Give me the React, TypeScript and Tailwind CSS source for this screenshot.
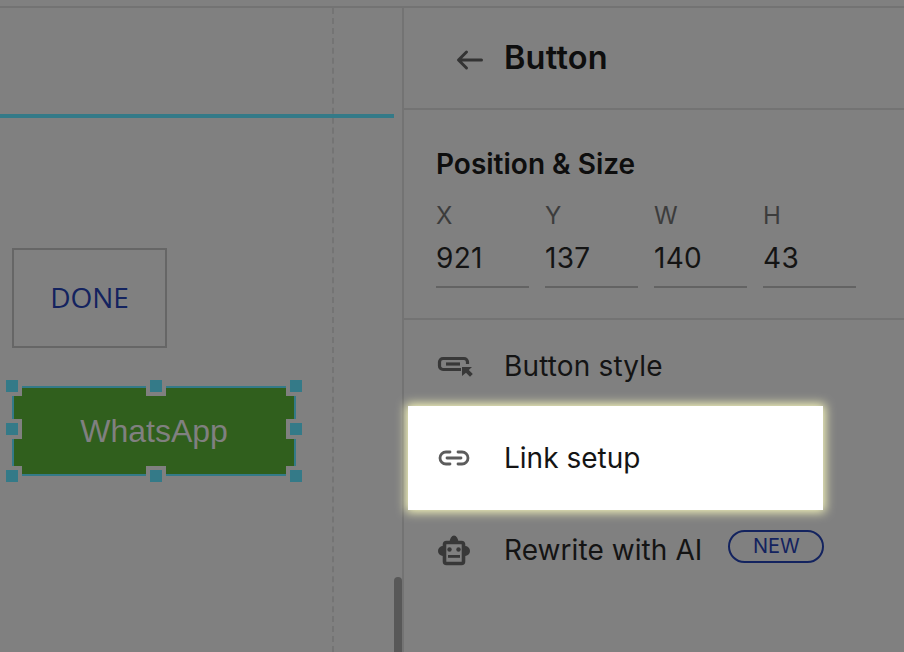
export default function App() {
  const fields = [
    ["X", "921"],
    ["Y", "137"],
    ["W", "140"],
    ["H", "43"],
  ];
  const handles = [
    "left-[2px] top-[376px]", "left-[146px] top-[376px]", "left-[286px] top-[376px]",
    "left-[2px] top-[419px]", "left-[286px] top-[419px]",
    "left-[2px] top-[466px]", "left-[146px] top-[466px]", "left-[286px] top-[466px]",
  ];
  return (
    <div className="w-[904px] h-[652px] overflow-hidden bg-[#808080] flex flex-col font-['Inter',sans-serif]">
      <div className="h-[8px] shrink-0 border-b-2 border-[#737373]" />
      <div className="flex flex-1 min-h-0">
        <div className="relative w-[403px] shrink-0 -mt-[8px]">
          <div className="absolute left-[332px] top-[8px] bottom-0 border-l-2 border-dashed border-[#747474]" />
          <div className="absolute left-0 top-[114px] w-[394px] h-[4px] bg-[#347a88]" />
          <div className="absolute left-[12px] top-[248px] w-[155px] h-[100px] border-2 border-[#666666] flex items-center justify-center pb-[2px] text-[#13235f] text-[28px] font-['Open_Sans',sans-serif]">
            DONE
          </div>
          <div className="absolute left-[12px] top-[386px] w-[284px] h-[90px] bg-[#305f1d] border-2 border-[#347a88] flex items-center justify-center text-[#808080] text-[32px] font-['Liberation_Sans',sans-serif]">
            WhatsApp
          </div>
          {handles.map((h) => (
            <div key={h} className={`absolute ${h} w-[12px] h-[12px] box-content border-[4px] border-[#808080] bg-[#347a88]`} />
          ))}
          <div className="absolute left-[394px] top-[577px] w-[8px] h-[75px] rounded-t-[4px] bg-[#585858]" />
        </div>
        <div className="flex-1 min-w-0 border-l-2 border-[#737373] -ml-[1px] flex flex-col">
          <div className="h-[102px] shrink-0 border-b-2 border-[#737373] flex items-center pl-[50px] gap-[20px]">
            <svg width="30" height="24" viewBox="0 0 30 24" fill="none" stroke="#333333" strokeWidth="3" strokeLinecap="round" strokeLinejoin="round" className="mt-[3px]">
              <path d="M27.500 12H5M12.500 4L4.500 12l8 8" />
            </svg>
            <span className="text-[32.500px] tracking-[0.2px] font-semibold text-[#0e0e0e]">Button</span>
          </div>
          <div className="h-[210px] shrink-0 border-b-2 border-[#737373] pl-[32px] pt-[37px]">
            <div className="text-[28px] leading-[34px] font-semibold text-[#0e0e0e]">Position &amp; Size</div>
            <div className="flex gap-[16px] mt-[22px]">
              {fields.map(([l, v]) => (
                <div key={l} className="w-[93px]">
                  <div className="text-[24px] leading-[26px] text-[#3c3c3c]">{l}</div>
                  <div className="mt-[11px] h-[48px] border-b-2 border-[#636363] text-[28px] tracking-[0.3px] leading-[36px] text-[#141414]">{v}</div>
                </div>
              ))}
            </div>
          </div>
          <div className="h-[92px] shrink-0 flex items-center pl-[33px] gap-[31px]">
            <svg width="36" height="24" viewBox="0 0 36 24" fill="none" className="shrink-0 -mt-[1px]">
              <path d="M24 15.500H6a3.500 3.500 0 0 1-3.500-3.500V8A3.500 3.500 0 0 1 6 4.500h21A3.500 3.500 0 0 1 30.500 8v2" stroke="#383838" strokeWidth="3.200" />
              <path d="M9 10h14" stroke="#383838" strokeWidth="3.200" />
              <path d="M25 13h10l-3.200 3 4 4-2.800 2.800-4-4-4 3.200z" fill="#383838" />
            </svg>
            <span className="text-[28px] tracking-[0.15px] text-[#141414]">Button style</span>
          </div>
          <div className="h-[104px] -my-[6px] shrink-0 relative ml-[4px] w-[415px] bg-white shadow-[0_0_10px_2px_#ffffc0] flex items-center pl-[28px] gap-[32px]">
            <svg width="36" height="24" viewBox="0 0 36 24" fill="none" stroke="#5c5c5c" strokeWidth="2.800" className="shrink-0" strokeLinecap="round">
              <path d="M14 6h-4a6 6 0 0 0 0 12h4M22 6h4a6 6 0 0 1 0 12h-4M11 12h14" />
            </svg>
            <span className="text-[28px] text-[#141414]">Link setup</span>
          </div>
          <div className="h-[92px] shrink-0 flex items-center pl-[33px] gap-[31px]">
            <svg width="36" height="36" viewBox="0 0 36 36" className="shrink-0">
              <path d="M12.500 11a4.500 7.500 0 0 1 9 0z" fill="#383838" />
              <path d="M6 14a5 5 0 0 0 -5 5a5 5 0 0 0 5 5zM28 14a5 5 0 0 1 5 5a5 5 0 0 1 -5 5z" fill="#383838" />
              <rect x="7.500" y="10.500" width="19" height="21" rx="2" fill="none" stroke="#383838" strokeWidth="3.600" />
              <circle cx="12.500" cy="17.500" r="2.200" fill="#383838" />
              <circle cx="21.500" cy="17.500" r="2.200" fill="#383838" />
              <rect x="11" y="23" width="12" height="2.800" fill="#383838" />
            </svg>
            <span className="text-[28px] tracking-[0.07px] text-[#141414]">Rewrite with AI</span>
            <span className="-ml-[5px] -mt-[8px] w-[96px] h-[33px] rounded-full border-2 border-[#13235f] text-[#13235f] text-[20px] flex items-center justify-center">NEW</span>
          </div>
        </div>
      </div>
    </div>
  );
}
